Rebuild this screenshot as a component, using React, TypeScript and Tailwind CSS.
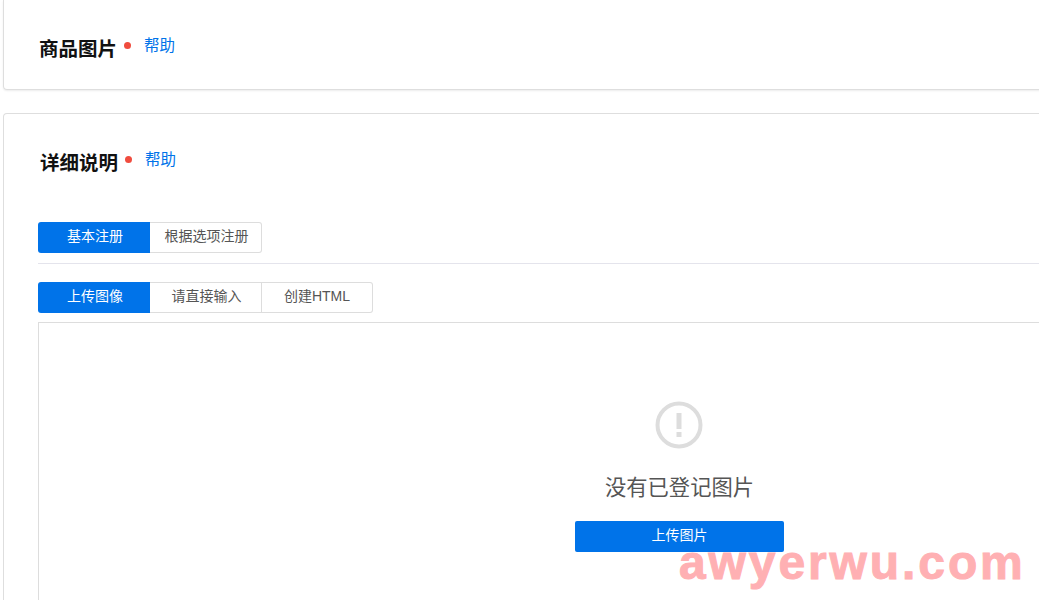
const fontStack = "font-['Liberation_Sans','Noto_Sans_CJK_SC',sans-serif]";

function SectionTitle({ title }: { title: string }) {
  return (
    <div className="flex items-center">
      <h2 className="mt-[2px] text-[19.5px] leading-[24px] font-bold text-[#111]">{title}</h2>
      <span className="mt-[-6px] ml-[7px] h-[7px] w-[7px] rounded-full bg-[#f04c3e]" />
      <a className="mt-[-4px] ml-[13px] text-[15.5px] leading-[20px] text-[#0073e9]">帮助</a>
    </div>
  );
}

function Tabs({ items }: { items: string[] }) {
  return (
    <div className="flex">
      {items.map((item, i) => (
        <button
          key={item}
          className={
            i === 0
              ? "flex h-[31px] w-[112px] items-center justify-center rounded-l-[3px] bg-[#0073e9] pb-[2px] pl-[2px] text-[14px] text-white"
              : i === 2
                ? "flex h-[31px] w-[111px] items-center justify-center rounded-r-[3px] border border-l-0 border-[#dddddd] pb-[2px] text-[14px] text-[#555]"
                : "flex h-[31px] w-[112px] items-center justify-center border border-l-0 border-[#dddddd] pb-[2px] pl-[2px] text-[14px] text-[#555] last:rounded-r-[3px]"
          }
        >
          {item}
        </button>
      ))}
    </div>
  );
}

export default function App() {
  return (
    <div className={`relative h-[600px] w-[1039px] overflow-hidden bg-white ${fontStack}`}>
      <section className="ml-[3px] flex h-[90px] w-[1353px] items-center rounded-b-[4px] border border-t-0 border-[#dedede] pt-[7px] pl-[35px] shadow-[0_1px_2px_rgba(0,0,0,0.08)]">
        <SectionTitle title="商品图片" />
      </section>

      <section className="mt-[23px] ml-[3px] w-[1353px] rounded-t-[4px] border border-b-0 border-[#dedede] pt-[35px] pr-[34px] pl-[34px]">
        <div className="pl-[2px]">
          <SectionTitle title="详细说明" />
        </div>

        <div className="mt-[47px]">
          <Tabs items={["基本注册", "根据选项注册"]} />
        </div>
        <div className="mt-[10px] h-px bg-[#e4e4ec]" />
        <div className="mt-[18px]">
          <Tabs items={["上传图像", "请直接输入", "创建HTML"]} />
        </div>

        <div className="mt-[9px] flex h-[400px] flex-col items-center border border-[#dddddd] pt-[78px]">
          <svg className="mr-[2px]" width="48" height="48" viewBox="0 0 48 48" fill="none">
            <circle cx="24" cy="24" r="21.5" stroke="#dddddd" strokeWidth="4" />
            <rect x="21.5" y="12" width="5" height="16" fill="#dddddd" />
            <rect x="21.5" y="31" width="5" height="5" fill="#dddddd" />
          </svg>
          <p className="mt-[24px] text-[21.3px] leading-[30px] text-[#555]">没有已登记图片</p>
          <button className="mt-[18px] h-[31px] w-[209px] rounded-[2px] bg-[#0073e9] pb-[2px] text-[14px] text-white">
            上传图片
          </button>
        </div>
      </section>

      <div className="absolute top-[548px] left-[679px] font-['Liberation_Sans',sans-serif] text-[48px] leading-[30px] font-bold tracking-[2.9px] whitespace-nowrap text-[#ffb0b3] [-webkit-text-stroke:1px_#ffb0b3]">
        awyerwu.com
      </div>
    </div>
  );
}
